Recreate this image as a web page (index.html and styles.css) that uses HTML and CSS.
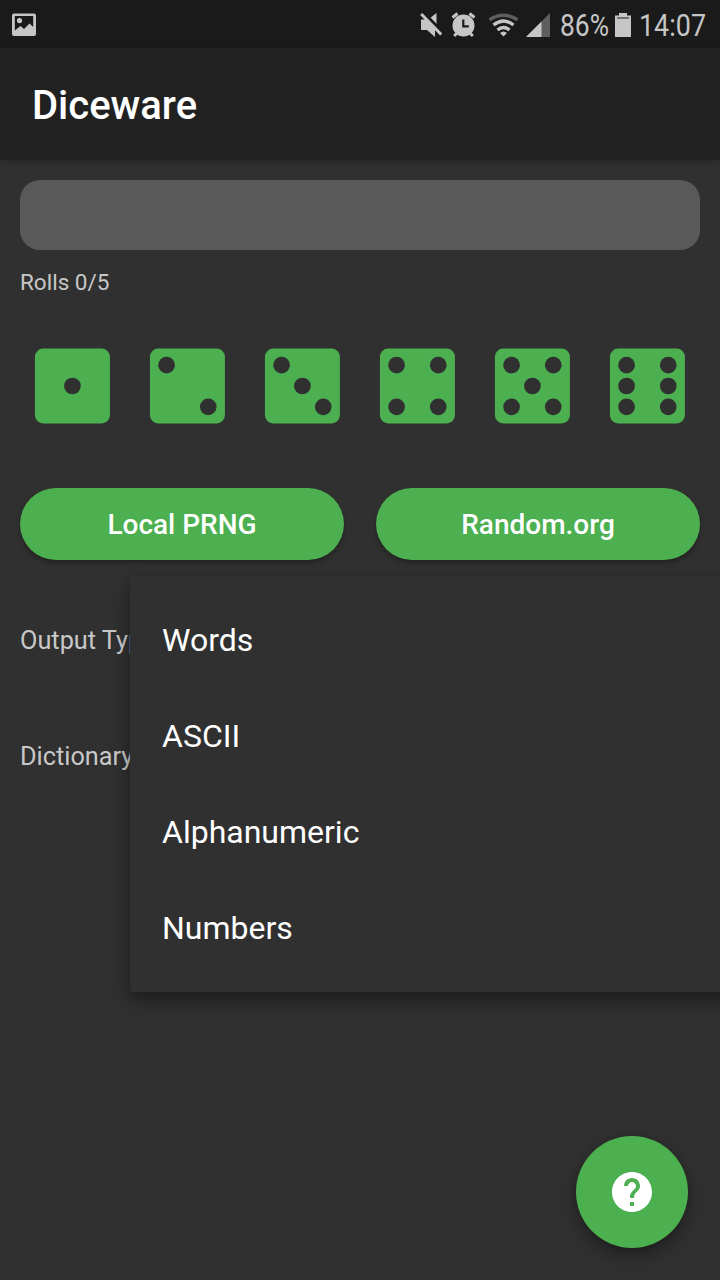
FILE: index.html
```html
<!DOCTYPE html>
<html lang="en">
<head>
<meta charset="utf-8">
<title>Diceware</title>
<link rel="stylesheet" href="styles.css">
</head>
<body>
<svg class="defs" aria-hidden="true">
  <defs>
    <rect id="die" x="3" y="3" width="18" height="18" rx="2"/>
    <circle id="pip" r="2"/>
  </defs>
</svg>
<div class="screen">
  <div class="status">
    <svg class="photo" width="24" height="24" viewBox="0 0 24 24"><path fill-rule="evenodd" d="M2 1.500h20a2 2 0 0 1 2 2v18.500a2 2 0 0 1-2 2H2a2 2 0 0 1-2-2V3.500a2 2 0 0 1 2-2zM2.800 4v14.500l5.700-4.500 3.500 3 5.500-5.500 3.700 3.500V4zM7.500 6a2.600 2.600 0 1 1 0 5.200a2.600 2.600 0 0 1 0-5.200z"/></svg>
    <svg class="signals" width="142" height="48" viewBox="0 0 142 48">
      <path d="M3 19.500h5l9 9.500v8l-8-7H3zM11.500 18.500L18.500 13v13z"/>
      <path class="slash-gap" d="M5.500 12L26 33"/>
      <path class="slash" d="M3.200 14L23.200 34.500"/>
      <circle cx="45.500" cy="25.500" r="11"/>
      <path class="alarm-lines" d="M34.500 17.500l5-4M56.500 17.500l-5-4M39 33l-2.800 3M52 33l2.800 3"/>
      <path class="hands" d="M45.300 19.500v6.800h5.500"/>
      <path class="wifi dim" d="M71.500 19.700q14-9 28 0"/>
      <path class="wifi" d="M75.500 25q10-8.200 20 0M79.500 30q6-5 12 0"/>
      <path d="M85.500 36.500l-3.500-3.600q3.500-3 7 0z"/>
      <path class="dim-fill" d="M108 37l24-24v24z"/>
      <path d="M108 37l15.500-15.500V37z"/>
    </svg>
    <svg class="readout" width="160" height="48" viewBox="0 0 160 48">
      <text x="0" y="36" textLength="49" lengthAdjust="spacingAndGlyphs">86%</text>
      <path d="M55 15.500h4V13h8v2.500h4V37H55z"/>
      <path class="battery-line" d="M57 18h12"/>
      <text x="79" y="36" textLength="67" lengthAdjust="spacingAndGlyphs">14:07</text>
    </svg>
  </div>
  <header class="appbar"><h1>Diceware</h1></header>
  <main class="content">
    <div class="field"></div>
    <p class="rolls">Rolls 0/5</p>
    <div class="dice">
      <svg viewBox="-0.1 0 24 24"><use href="#die"/><g class="pips"><use href="#pip" x="12" y="12"/></g></svg>
      <svg viewBox="-0.1 0 24 24"><use href="#die"/><g class="pips"><use href="#pip" x="7" y="7"/><use href="#pip" x="17" y="17"/></g></svg>
      <svg viewBox="-0.1 0 24 24"><use href="#die"/><g class="pips"><use href="#pip" x="7" y="7"/><use href="#pip" x="12" y="12"/><use href="#pip" x="17" y="17"/></g></svg>
      <svg viewBox="-0.1 0 24 24"><use href="#die"/><g class="pips"><use href="#pip" x="7" y="7"/><use href="#pip" x="17" y="7"/><use href="#pip" x="7" y="17"/><use href="#pip" x="17" y="17"/></g></svg>
      <svg viewBox="-0.1 0 24 24"><use href="#die"/><g class="pips"><use href="#pip" x="7" y="7"/><use href="#pip" x="17" y="7"/><use href="#pip" x="12" y="12"/><use href="#pip" x="7" y="17"/><use href="#pip" x="17" y="17"/></g></svg>
      <svg viewBox="-0.1 0 24 24"><use href="#die"/><g class="pips"><use href="#pip" x="7" y="7"/><use href="#pip" x="17" y="7"/><use href="#pip" x="7" y="12"/><use href="#pip" x="17" y="12"/><use href="#pip" x="7" y="17"/><use href="#pip" x="17" y="17"/></g></svg>
    </div>
    <div class="buttons">
      <button class="pill">Local PRNG</button>
      <button class="pill">Random.org</button>
    </div>
    <div class="option">Output Type</div>
    <div class="option">Dictionary</div>
  </main>
  <ul class="menu">
    <li>Words</li>
    <li>ASCII</li>
    <li>Alphanumeric</li>
    <li>Numbers</li>
  </ul>
  <button class="fab" aria-label="Help">
    <svg width="48" height="48" viewBox="0 0 24 24"><path d="M12 2C6.480 2 2 6.480 2 12s4.480 10 10 10 10-4.480 10-10S17.520 2 12 2zm1 17h-2v-2h2v2zm2.070-7.750l-.9.920C13.450 12.900 13 13.500 13 15h-2v-.5c0-1.100.45-2.100 1.170-2.830l1.240-1.260c.37-.36.590-.86.590-1.410 0-1.100-.9-2-2-2s-2 .9-2 2H8c0-2.210 1.790-4 4-4s4 1.790 4 4c0 .88-.36 1.680-.93 2.250z"/></svg>
  </button>
</div>
</body>
</html>
```
FILE: styles.css
```css
* { box-sizing: border-box; }
body { margin: 0; font-family: Roboto, sans-serif; background: #303030; }
.defs { display: block; width: 0; height: 0; }
.screen {
  position: relative;
  width: 720px;
  height: 1280px;
  overflow: hidden;
  background: #303030;
}
.status {
  display: flex;
  align-items: center;
  height: 48px;
  padding-left: 12px;
  background: #1a1a1a;
  fill: #c6c6c6;
}
.signals { margin-left: 382px; }
.slash { stroke: #c6c6c6; stroke-width: 3; }
.slash-gap { stroke: #1a1a1a; stroke-width: 2.4; }
.alarm-lines { stroke: #c6c6c6; stroke-width: 3; }
.hands { stroke: #1a1a1a; stroke-width: 2.2; fill: none; }
.wifi { stroke: #c6c6c6; stroke-width: 3.4; fill: none; }
.wifi.dim { stroke: #5e5e5e; }
.dim-fill { fill: #5e5e5e; }
.battery-line { stroke: #1a1a1a; stroke-width: 1; }
.readout { font-size: 31px; }
.appbar {
  position: relative;
  display: flex;
  align-items: center;
  height: 112px;
  padding: 4px 32px 0;
  background: #212121;
  box-shadow: 0 2px 6px rgba(0, 0, 0, .2);
}
h1 { margin: 0; font-size: 40px; font-weight: 500; line-height: 48px; color: #fff; }
.content { padding: 20px; color: #c8c8c8; }
.field { height: 70px; border-radius: 20px; background: #595959; }
.rolls { margin: 18px 0 0; font-size: 22.5px; line-height: 28px; }
.dice { display: flex; gap: 15px; margin: 40px 2px 0; }
.dice svg { flex: none; width: 100px; height: 100px; fill: #4caf50; }
.dice .pips { fill: #303030; }
.buttons { display: flex; gap: 32px; margin-top: 52px; }
.pill {
  flex: 1;
  height: 72px;
  padding: 2px 0 0;
  border: 0;
  border-radius: 36px;
  background: #4caf50;
  color: #fff;
  font: 500 28px/32px Roboto, sans-serif;
  box-shadow: 0 3px 5px rgba(0, 0, 0, .3);
}
.option { display: flex; align-items: center; height: 116px; font-size: 25.3px; }
.buttons + .option { margin-top: 22px; }
.menu {
  position: absolute;
  left: 130px;
  top: 576px;
  width: 640px;
  height: 416px;
  margin: 0;
  padding: 16px 0;
  list-style: none;
  background: #303030;
  border-radius: 4px;
  box-shadow: 0 10px 20px rgba(0, 0, 0, .32), 0 4px 10px rgba(0, 0, 0, .12);
}
.menu li {
  display: flex;
  align-items: center;
  height: 96px;
  padding-left: 32px;
  font-size: 32px;
  color: #fff;
}
.fab {
  position: absolute;
  left: 576px;
  top: 1136px;
  display: grid;
  place-items: center;
  width: 112px;
  height: 112px;
  padding: 0;
  border: 0;
  border-radius: 50%;
  background: #4caf50;
  fill: #fff;
  box-shadow: 0 8px 18px rgba(0, 0, 0, .3), 0 2px 6px rgba(0, 0, 0, .15);
}
```
